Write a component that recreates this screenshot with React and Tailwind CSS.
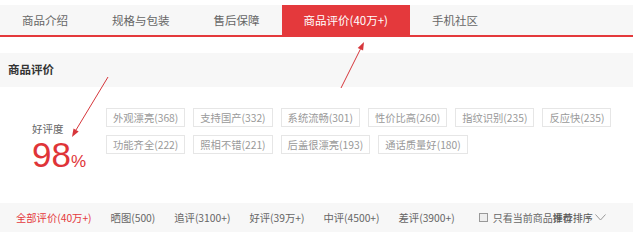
import React from 'react';

const tabs = ['商品介绍', '规格与包装', '售后保障', '商品评价(40万+)', '手机社区'];
const tagRows = [
  ['外观漂亮(368)', '支持国产(332)', '系统流畅(301)', '性价比高(260)', '指纹识别(235)', '反应快(235)'],
  ['功能齐全(222)', '照相不错(221)', '后盖很漂亮(193)', '通话质量好(180)'],
];
const filters = ['全部评价(40万+)', '晒图(500)', '追评(3100+)', '好评(39万+)', '中评(4500+)', '差评(3900+)'];

const Arrows = () => (
  <svg className="absolute inset-0 pointer-events-none" width="640" height="248" viewBox="0 0 640 248">
    <line x1="108" y1="77" x2="76" y2="130" stroke="#d6363b" strokeWidth="1" />
    <polygon points="72,137 78.7,131.6 73.5,128.6" fill="#d6363b" />
    <line x1="341" y1="88" x2="360.4" y2="49.2" stroke="#d6363b" strokeWidth="1" />
    <polygon points="364,42 363.1,50.5 357.7,47.9" fill="#d6363b" />
  </svg>
);

export default function App() {
  return (
    <div className="relative w-[640px] h-[248px] bg-white overflow-hidden font-['Noto_Sans_CJK_SC',sans-serif]">
      <div className="w-[633px] pt-[5px]">
        {/* tab bar */}
        <div className="flex h-[32px] bg-[#f7f7f7] border-b-2 border-[#e4393c]">
          {tabs.map((t, i) => (
            <div
              key={t}
              className={
                i === 3
                  ? 'flex items-center pt-[1px] px-[22px] text-[11.5px] bg-[#e4393c] text-white'
                  : 'flex items-center pt-[1px] px-[22px] text-[11.5px] text-[#666]'
              }
            >
              {t}
            </div>
          ))}
        </div>

        {/* section header */}
        <div className="mt-[16px] h-[34px] bg-[#f7f7f7] flex items-center pl-[8px] text-[11.5px] font-bold text-[#333]">
          商品评价
        </div>

        {/* rate + tags */}
        <div className="flex h-[116px]">
          <div className="w-[106px] pl-[32px] pt-[35px] flex flex-col gap-[1px]">
            <div className="text-[10.5px] leading-[14px] text-[#666]">好评度</div>
            <div className="flex items-baseline text-[#df3438] font-['Liberation_Sans',sans-serif] leading-none">
              <span className="text-[35px] leading-none">98</span>
              <span className="text-[17px] leading-none">%</span>
            </div>
          </div>
          <div className="pt-[21px] flex flex-col gap-[8px]">
            {tagRows.map((row, r) => (
              <div key={r} className="flex gap-[8px]">
                {row.map((tag) => (
                  <span
                    key={tag}
                    className="h-[19px] px-[6px] flex items-center border border-[#e6e6e6] text-[10.3px] text-[#999] whitespace-nowrap"
                  >
                    {tag}
                  </span>
                ))}
              </div>
            ))}
          </div>
        </div>

        {/* filter bar */}
        <div className="h-[29px] bg-[#f7f7f7] flex items-center pl-[16px] text-[10.3px] text-[#666]">
          <div className="flex gap-[19px]">
            {filters.map((f, i) => (
              <span key={f} className={i === 0 ? 'text-[#e4393c]' : ''}>
                {f}
              </span>
            ))}
          </div>
          <span className="ml-[24px] w-[9px] h-[9px] border border-[#999] bg-[#eee]" />
          <span className="ml-[5px] text-[10px] whitespace-nowrap">只看当前商品评价</span>
          <span className="-ml-[20px] text-[10px] text-[#555] whitespace-nowrap">推荐排序</span>
          <svg className="ml-[2px]" width="11" height="7" viewBox="0 0 11 7">
            <polyline points="0.5,0.5 5.5,6 10.5,0.5" fill="none" stroke="#999" strokeWidth="1" />
          </svg>
        </div>
      </div>
      <Arrows />
    </div>
  );
}
